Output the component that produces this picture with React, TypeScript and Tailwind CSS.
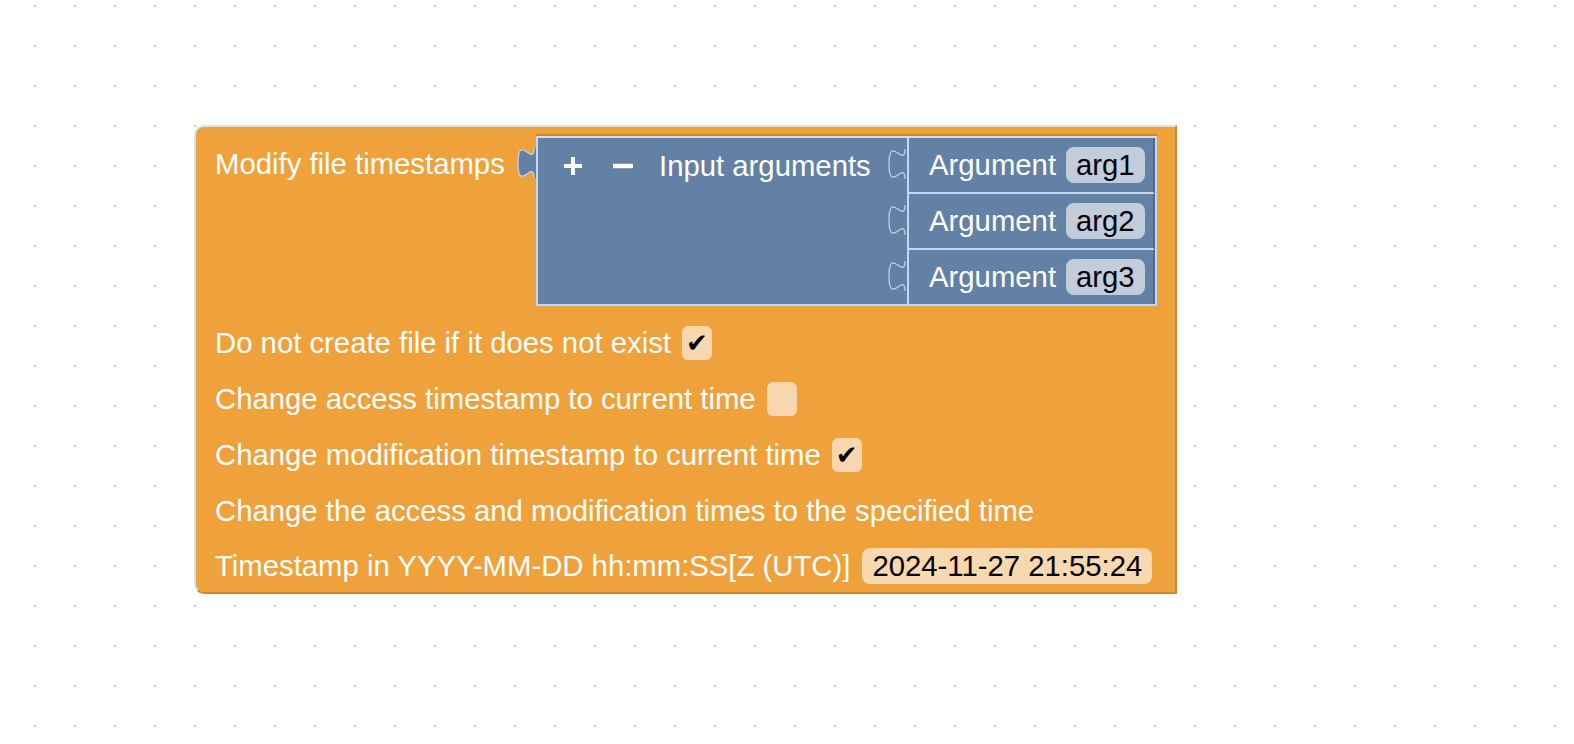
import React from "react";

const BLUE = "#6380a5";
const LIGHT = "#c3d8ec";

function Tab({ className, stroke }: { className: string; stroke: string }) {
  return (
    <svg viewBox="0 0 9 15" width={18} height={30} className={`absolute overflow-visible ${className}`}>
      <path d="M9,0 H8 c 0,10 -8,-8 -8,7.5 s 8,-2.5 8,7.5 H9 Z" fill={BLUE} />
      <path d="M8,0 c 0,10 -8,-8 -8,7.5 s 8,-2.5 8,7.5" fill="none" stroke={stroke} strokeWidth={0.6} />
    </svg>
  );
}

function ArgBlock({ name, h, last }: { name: string; h: string; last?: boolean }) {
  return (
    <div
      className={`relative flex ${h} items-center gap-[10px] border-l-2 border-r-2 border-[#c3d8ec] border-r-[#4f6a8e] pl-[20px] ${
        last ? "" : "border-b-2"
      }`}
    >
      <Tab className="-left-[20px] top-[11px]" stroke={LIGHT} />
      <span>Argument</span>
      <span className="flex h-[36px] items-center rounded-[8px] bg-[#c2ccdb] px-[10px] text-black">{name}</span>
    </div>
  );
}

function Check({ on }: { on: boolean }) {
  return (
    <span className="flex h-[34px] w-[30px] items-center justify-center rounded-[6px] bg-[#f8d7ae] font-['DejaVu_Sans',sans-serif] text-[26px] text-black">
      {on ? "✔" : ""}
    </span>
  );
}

function Row({ children, h = "h-[56px]", gap = "gap-[11px]" }: { children: React.ReactNode; h?: string; gap?: string }) {
  return <div className={`flex ${h} items-center ${gap} pl-[19px]`}>{children}</div>;
}

export default function App() {
  return (
    <div className="relative h-[744px] w-[1574px] overflow-hidden bg-white bg-[radial-gradient(circle,#c6c6c6_1px,transparent_1.3px)] bg-[size:40px_40px] bg-[position:15px_26px] pl-[194px] pt-[125px] font-['Liberation_Sans',Arial,sans-serif] text-[29.3px] leading-none text-white">
      <div className="flex w-[983px] flex-col rounded-l-[10px] border-2 border-[#cfe6f2] border-r-[#c8883a] border-b-[#c8883a] bg-[#efa13c]">
        {/* first input: name + argument list */}
        <div className="flex items-start pb-[9px] pt-[9px]">
          <div className="flex h-[56px] w-[340px] shrink-0 items-center pl-[19px]">Modify file timestamps</div>
          <div className="relative flex w-[621px] border-2 border-[#c3d8ec] border-t-[#cfe2f2] bg-[#6380a5] shadow-[0_-2px_0_#c8883a]">
            <Tab className="-left-[20px] top-[10px]" stroke={LIGHT} />
            <div className="flex h-[55px] w-[369px] shrink-0 items-center pl-[24px]">
              <svg width="22" height="22" viewBox="0 0 22 22" className="mr-[28px]">
                <path d="M11 2v18M2 11h18" stroke="white" strokeWidth="4" />
              </svg>
              <svg width="22" height="22" viewBox="0 0 22 22" className="mr-[25px]">
                <path d="M1 11h20" stroke="white" strokeWidth="4.5" />
              </svg>
              <span>Input arguments</span>
            </div>
            <div className="flex w-[248px] flex-col">
              <ArgBlock name="arg1" h="h-[56px]" />
              <ArgBlock name="arg2" h="h-[56px]" />
              <ArgBlock name="arg3" h="h-[54px]" last />
            </div>
          </div>
        </div>
        <Row>
          <span>Do not create file if it does not exist</span>
          <Check on />
        </Row>
        <Row>
          <span>Change access timestamp to current time</span>
          <Check on={false} />
        </Row>
        <Row>
          <span>Change modification timestamp to current time</span>
          <Check on />
        </Row>
        <Row>
          <span>Change the access and modification times to the specified time</span>
        </Row>
        <Row h="h-[53px]" gap="gap-[12px]">
          <span>Timestamp in YYYY-MM-DD hh:mm:SS[Z (UTC)]</span>
          <span className="flex h-[36px] items-center rounded-[8px] bg-[#f8d8b0] px-[10px] text-black">
            2024-11-27 21:55:24
          </span>
        </Row>
      </div>
    </div>
  );
}
